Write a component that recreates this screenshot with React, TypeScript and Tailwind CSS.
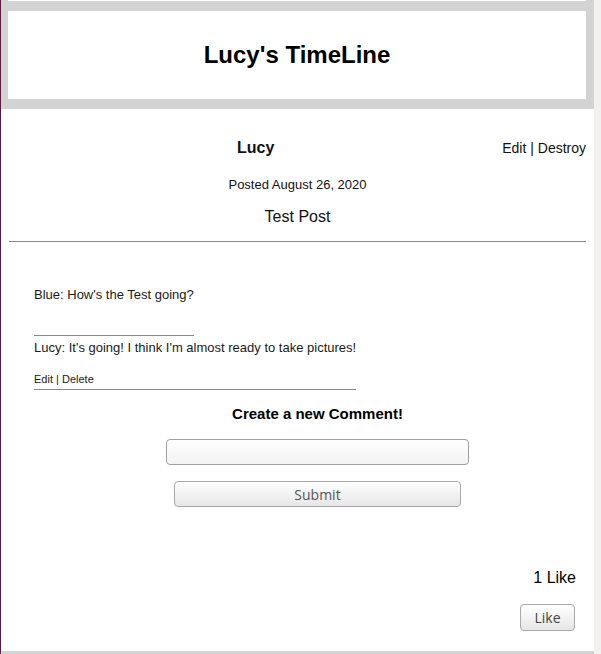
export default function App() {
  return (
    <div className="flex min-h-[654px] bg-white text-[#111]" style={{ fontFamily: "'Liberation Sans', Arial, sans-serif" }}>
      {/* desktop edge */}
      <div className="w-px shrink-0 bg-[#5e1a3f]" />

      <div className="flex flex-1 flex-col">
        {/* ── Banner ── */}
        <header className="bg-[#d3d3d3] pl-[7px] pr-[8px] pb-[10px]">
          <div className="h-px bg-white" />
          <div className="mt-[10px] flex h-[88px] items-center justify-center bg-white">
            <h1 className="text-[24px] font-bold leading-none text-black">Lucy's TimeLine</h1>
          </div>
        </header>

        {/* ── Post ── */}
        <section className="px-[8px]">
          <div className="mt-[30px] flex h-[18px] items-center">
            <h3 className="flex-1 text-center text-[16px] font-bold leading-[18px]">Lucy</h3>
            <div className="text-[14px] leading-[18px]">
              <a>Edit</a> | <a>Destroy</a>
            </div>
          </div>
          <p className="mt-[20px] text-center text-[13px] leading-[16px]">Posted August 26, 2020</p>
          <p className="mt-[15px] text-center text-[16px] leading-[18px]">Test Post</p>
          <hr className="mt-[15px] border-t border-[#8a8a8a]" />
        </section>

        {/* ── Comments ── */}
        <section className="pl-[33px] text-[13px] text-[#1a1a1a]">
          <div className="mt-[45px] inline-block border-b border-[#888] pb-[32px]">
            <p className="leading-[16px]">Blue: How's the Test going?</p>
          </div>
          <div />
          <div className="inline-block border-b border-[#888] pt-[4px] pb-[3px]">
            <p className="leading-[16px]">Lucy: It's going! I think I'm almost ready to take pictures!</p>
            <p className="mt-[17px] text-[11px] leading-[13px]">
              <a>Edit</a> | <a>Delete</a>
            </p>
          </div>
        </section>

        {/* ── New comment form ── */}
        <section className="flex flex-col items-center pl-[40px]">
          <h4 className="mt-[15px] text-[15px] font-bold leading-[18px] text-black">Create a new Comment!</h4>
          <input
            type="text"
            className="mt-[16px] h-[26px] w-[303px] rounded-[4px] border border-[#a0a0a0] bg-gradient-to-b from-white to-[#f3f3f3] px-2 text-[14px] outline-none"
          />
          <button
            className="mt-[16px] h-[26px] w-[287px] rounded-[4px] border border-[#a8a8a8] bg-gradient-to-b from-white to-[#e6e6e6] text-[14px] text-[#555]"
            style={{ fontFamily: "'Open Sans', 'DejaVu Sans', sans-serif" }}
          >
            Submit
          </button>
        </section>

        {/* ── Likes ── */}
        <section className="flex flex-col items-end pr-[19px]">
          <p className="mt-[62px] mr-[-1px] text-[16px] leading-[18px] text-black">1 Like</p>
          <button
            className="mt-[17px] h-[27px] w-[55px] rounded-[4px] border border-[#a8a8a8] bg-gradient-to-b from-white to-[#e6e6e6] text-[14px] text-[#444]"
            style={{ fontFamily: "'Open Sans', 'DejaVu Sans', sans-serif" }}
          >
            Like
          </button>
        </section>

        <div className="mt-[20px] h-[3px] bg-[#d3d3d3]" />
      </div>

      {/* window edge */}
      <div className="w-[7px] shrink-0 bg-[#f2f1f0]" />
    </div>
  );
}
